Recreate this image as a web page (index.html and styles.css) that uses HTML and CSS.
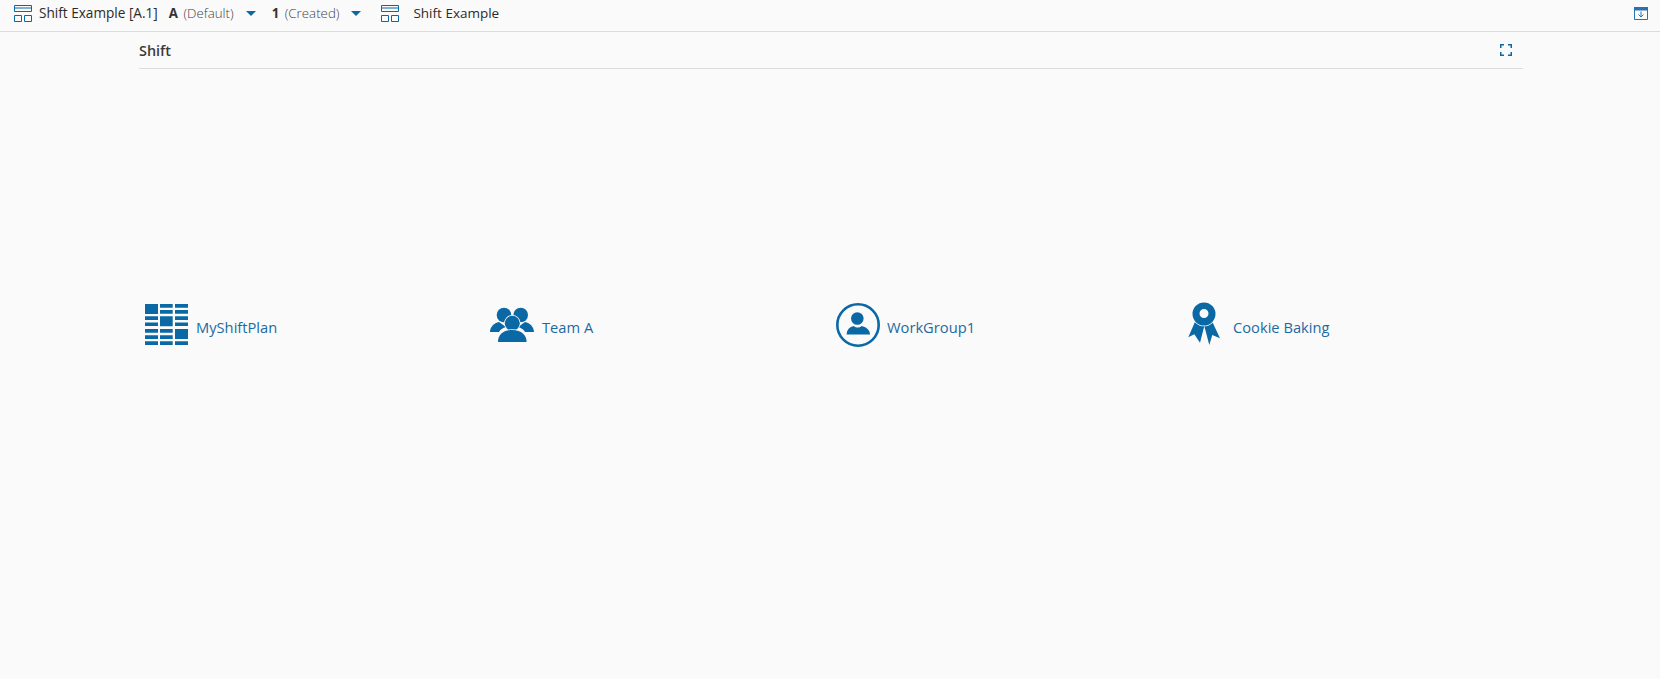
FILE: index.html
```html
<!DOCTYPE html>
<html lang="en">
<head>
    <meta charset="UTF-8">
    <title>Shift Example</title>
    <link rel="stylesheet" href="styles.css">
</head>
<body>
    <div class="topbar">
        <svg class="layout-icon" viewBox="0 0 18 17"><path d="M.5.5h17v6H.5zM.5 3h17M.5 10.500h7v6h-7zM10.500 10.500h7v6h-7z"/></svg>
        <span class="title">Shift Example [A.1]</span>
        <span class="version"><b>A</b> <span class="muted">(Default)</span></span>
        <span class="caret"></span>
        <span class="version version-2"><b>1</b> <span class="muted">(Created)</span></span>
        <span class="caret"></span>
        <svg class="layout-icon layout-icon-2" viewBox="0 0 18 17"><path d="M.5.5h17v6H.5zM.5 3h17M.5 10.500h7v6h-7zM10.500 10.500h7v6h-7z"/></svg>
        <span class="title title-2">Shift Example</span>
        <svg class="dock-icon" viewBox="0 0 14 13"><path class="dock-bar" d="M0 0h14v3.500H0z"/><path d="M.5.500h13v12H.5zM7 4.500v5.500M4.500 7.500 7 10l2.500-2.500"/></svg>
    </div>

    <div class="panel">
        <div class="panel-header">
            <span class="panel-title">Shift</span>
            <svg class="expand-icon" viewBox="0 0 12 12"><path d="M.75 4V.75H4M8 .75h3.250V4M11.250 8v3.250H8M4 11.250H.75V8"/></svg>
        </div>

        <div class="tiles">
            <a class="tile" href="#">
                <svg class="tile-icon" viewBox="0 0 44 44">
                    <path d="M0 1h13v10H0zM15 1h12.700v3.700H15zM30 1h13v3.700H30zM15 7.100h12.700v3.700H15zM30 7.100h13v3.700H30zM0 13.300h13V17H0zM15 13.300h12.700v10H15zM30 13.300h13V17H30zM0 19.400h13v3.700H0zM30 19.400h13v3.700H30zM0 26h13v3.700H0zM15 26h12.700v3.700H15zM30 26h13v10H30zM0 32.200h13v3.700H0zM15 32.200h12.700v3.700H15zM0 38.300h13V42H0zM15 38.300h12.700V42H15zM30 38.300h13V42H30z"/>
                </svg>
                <span>MyShiftPlan</span>
            </a>
            <a class="tile" href="#">
                <svg class="tile-icon" viewBox="1 0 44 44">
                    <circle cx="14" cy="12" r="7.300"/>
                    <circle cx="30.700" cy="12" r="7.300"/>
                    <path d="M0 29c0-5 4-9 9-10l7 5c-4 1-6 3-7 5z"/>
                    <path d="M44 29c0-5-4-9-9-10l-7 5c4 1 6 3 7 5z"/>
                    <circle class="front" cx="22.300" cy="20.300" r="7.500"/>
                    <path class="front" d="M8 39c0-7 5-12 14.300-12s14.300 5 14.300 12z"/>
                </svg>
                <span>Team A</span>
            </a>
            <a class="tile tile-group" href="#">
                <svg class="tile-icon" viewBox="0 0 44 44">
                    <circle class="ring" cx="22" cy="22" r="20.700"/>
                    <circle cx="21.300" cy="15.500" r="6.300"/>
                    <path d="M10.700 31.500c0-5 3-7.500 7-8.500 3 2 5.500 2 8 0 4 1 8.300 3.500 8.300 8.500z"/>
                </svg>
                <span>WorkGroup1</span>
            </a>
            <a class="tile tile-award" href="#">
                <svg class="tile-icon" viewBox="0 0 44 44">
                    <path d="M12 18.700 5.300 34.300l6-3L17 39.700 21.300 23z"/>
                    <path d="M29.300 18.700 37 35.300l-7.700-3.300-3 10L21.300 23z"/>
                    <path class="front" fill-rule="evenodd" d="M21 -.500a11.500 11.500 0 1 1 0 23 11.500 11.500 0 0 1 0-23zm0 6.500a4.500 4.500 0 1 0 0 9 4.500 4.500 0 0 0 0-9z"/>
                </svg>
                <span>Cookie Baking</span>
            </a>
        </div>
    </div>
</body>
</html>
```

FILE: styles.css
```css
body {
    margin: 0;
    height: 679px;
    overflow: hidden;
    background-color: #fafafa;
    font-family: "Open Sans", sans-serif;
    font-size: 14px;
    color: #333;
}
svg {
    display: block;
    flex: none;
}
.topbar {
    display: flex;
    align-items: center;
    height: 31px;
    padding: 0 14px;
    border-bottom: 1px solid #dcdcdc;
}
.layout-icon {
    width: 18px;
    height: 17px;
    margin-top: -4px;
    fill: none;
    stroke: #0a69a5;
    stroke-width: 1;
}
.layout-icon-2 {
    margin-left: 20px;
}
.title {
    margin-left: 7px;
    margin-top: -6px;
    font-size: 13.600px;
    color: #2b2b2b;
}
.title-2 {
    margin-left: 14px;
    font-size: 13.500px;
}
.version {
    margin-left: 11px;
    margin-top: -6px;
    font-size: 13.300px;
}
.version-2 {
    margin-left: 16px;
}
.version b {
    font-weight: 700;
    margin-right: 2px;
}
.muted {
    font-weight: 300;
    color: #444;
}
.caret {
    width: 0;
    height: 0;
    margin-left: 12px;
    margin-top: -4px;
    border-left: 5px solid transparent;
    border-right: 5px solid transparent;
    border-top: 5px solid #0a69a5;
}
.dock-icon {
    width: 14px;
    height: 13px;
    margin-left: auto;
    margin-top: -4px;
    margin-right: -2px;
    fill: none;
    stroke: #2a72ae;
}
.dock-bar {
    fill: #2a72ae;
    stroke: none;
}
.panel {
    margin: 0 137px 0 139px;
}
.panel-header {
    display: flex;
    align-items: center;
    justify-content: space-between;
    height: 36px;
    padding-right: 11px;
    border-bottom: 1px solid #dcdcdc;
}
.panel-title {
    font-size: 14.400px;
    font-weight: 600;
    color: #3a3a3a;
}
.expand-icon {
    width: 12px;
    height: 12px;
    fill: none;
    stroke: #0a69a5;
    stroke-width: 1.500;
}
.tiles {
    display: grid;
    grid-template-columns: repeat(4, 1fr);
    padding-top: 234px;
}
.tile {
    display: flex;
    align-items: center;
    gap: 7px;
    padding-left: 6px;
    color: #1c6aa3;
    text-decoration: none;
    font-size: 14.700px;
}
.tile span {
    margin-top: 4px;
}
.tile-icon {
    width: 44px;
    height: 44px;
    overflow: visible;
    fill: #0a69a5;
}
.front {
    stroke: #fafafa;
    stroke-width: 1.600;
    paint-order: stroke;
}
.ring {
    fill: none;
    stroke: #0a69a5;
    stroke-width: 2.600;
}
.tile-group {
    padding-left: 5px;
}
.tile-award .tile-icon {
    margin-right: -1px;
}
```
